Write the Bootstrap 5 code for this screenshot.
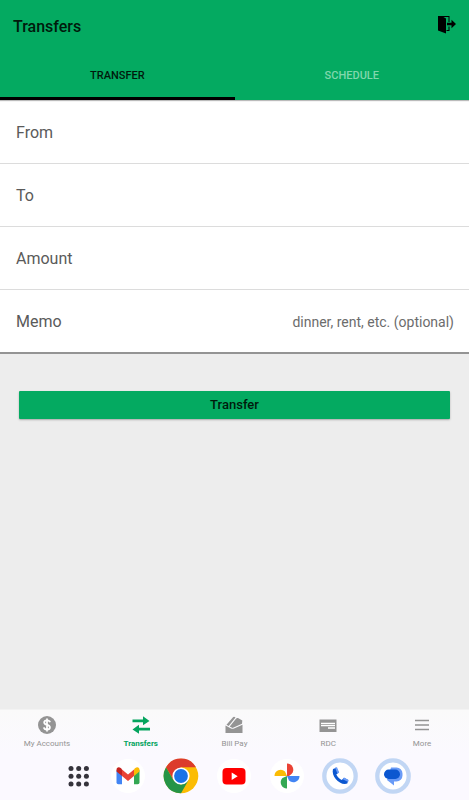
<!DOCTYPE html>
<html lang="en">
<head>
<meta charset="utf-8">
<meta name="viewport" content="width=device-width, initial-scale=1">
<title>Transfers</title>
<link href="https://cdn.jsdelivr.net/npm/bootstrap@5.3.0/dist/css/bootstrap.min.css" rel="stylesheet">
<style>
body{font-family:Roboto,"Liberation Sans",sans-serif;background:#ededed;color:#000}
button,input{font-family:inherit}
.app-top{background:#04aa61;box-shadow:0 1px 1px #bbb;z-index:1}
.title-bar{height:52px;padding:1px 13px 0}
.title-bar h1{font-size:16px;line-height:20px;font-weight:500;color:#001a0c}
.tab-link{height:48px;border:0;border-bottom:3px solid transparent;border-radius:0;background:none;font-size:11px;line-height:16px;font-weight:500;color:#80d7ad;padding:2px 0 0}
.tab-link.active{color:#001a0c;border-bottom-color:#000}
.form-rows{background:#fff;padding-top:1px;border-bottom:2px solid #949494}
.form-line{height:63px;padding:1px 15px 0 16px;border-bottom:1px solid #dcdcdc;font-size:16px;line-height:24px;color:#5a5a5a}
.form-line:last-child{border-bottom:0;height:62px}
.form-line input,.form-line button{border:0;outline:0;background:none;min-width:0;padding:0;text-align:right;font-size:14px;color:#666;height:40px}
.form-line input::placeholder{color:#6c6c6c;opacity:1}
.form-action{padding:37px 19px}
.btn-transfer{height:28px;background:#04aa61;border:0;border-radius:1px;padding:0;font-size:13px;line-height:16px;font-weight:500;color:#001a0c;box-shadow:0 1px 2px #aaa}
.app-bottom{background:linear-gradient(#fafafa,#fbf9ff 45px);border-top:1px solid #f3f3f3}
.nav-item-link{height:41px;padding-top:5px;color:#949494;font-size:8px;line-height:12px;text-decoration:none}
.nav-item-link svg{width:20px;height:20px;margin-bottom:3px}
.nav-item-link.active{color:#04a45e;font-weight:700}
.dock{height:49px;padding-right:1px;gap:17px}
.dock button,.top-icon{border:0;background:none;padding:0}
.dock button{width:36px;height:36px}
.dock svg,.top-icon svg{display:block}
</style>
<script src="https://cdn.jsdelivr.net/npm/bootstrap@5.3.0/dist/js/bootstrap.bundle.min.js"></script>
</head>
<body class="min-vh-100 d-flex flex-column">
<header class="app-top position-relative">
  <div class="title-bar d-flex align-items-center justify-content-between">
    <h1 class="m-0">Transfers</h1>
    <button class="top-icon mb-1" type="button" aria-label="Log out">
      <svg width="20" height="20" viewBox="0 0 20 20"><path d="M2 1h11.500v6h-1V2H7.500L10 3.500V18.500l-8-3zM12.500 11.500h1v4.500h-3v-1h2z"/><path d="M11 7.700h4.500V4.800l4.500 4.200-4.500 4.200v-2.900H11z"/></svg>
    </button>
  </div>
  <div class="nav nav-fill" role="tablist">
    <button class="nav-item tab-link active" role="tab" aria-selected="true" type="button">TRANSFER</button>
    <button class="nav-item tab-link" role="tab" aria-selected="false" type="button">SCHEDULE</button>
  </div>
</header>
<main class="flex-grow-1">
  <form>
    <div class="form-rows">
      <div class="form-line d-flex align-items-center"><label for="from">From</label><button id="from" class="flex-grow-1" type="button"></button></div>
      <div class="form-line d-flex align-items-center"><label for="to">To</label><button id="to" class="flex-grow-1" type="button"></button></div>
      <div class="form-line d-flex align-items-center"><label for="amount">Amount</label><input id="amount" class="flex-grow-1" type="text" inputmode="decimal"></div>
      <div class="form-line d-flex align-items-center"><label for="memo">Memo</label><input id="memo" class="flex-grow-1" type="text" placeholder="dinner, rent, etc. (optional)"></div>
    </div>
    <div class="form-action"><button class="btn btn-transfer w-100 d-block" type="button">Transfer</button></div>
  </form>
</main>
<footer class="app-bottom">
  <nav class="row row-cols-5 g-0" aria-label="Main">
    <a class="col nav-item-link d-flex flex-column align-items-center" href="#accounts">
      <svg viewBox="0 0 20 20"><circle cx="10" cy="10" r="9" fill="#949494"/><path d="M13 7.300C12.700 5.900 11.600 5.400 10 5.400 8.300 5.400 7.200 6.200 7.200 7.500c0 3.300 5.700 1.500 5.700 4.800 0 1.400-1.200 2.300-2.900 2.300s-2.900-.7-3.100-2.200M10 3.500v13" fill="none" stroke="#fff" stroke-width="1.800"/></svg>My Accounts</a>
    <a class="col nav-item-link active d-flex flex-column align-items-center" href="#transfers" aria-current="page">
      <svg viewBox="0 0 20 20" fill="#04a45e"><path d="M1.500 4.500h10.500V1.200L18.500 6l-6.500 4.300V7.200H1.500zM19 12.800H8V9.700l-6.500 4.700L8 18.700v-3.200h11z"/></svg>Transfers</a>
    <a class="col nav-item-link d-flex flex-column align-items-center" href="#bills">
      <svg viewBox="0 0 20 20" fill="#949494"><path d="M1.500 10.500l5.500 3q1.500.7 3 0l8.500-3.800v8.300h-17z"/><path d="M2.500 9.800L9 2.200q.8-.8 1.800-.2l.7.400-6.800 8.500zM5.700 11.500l6.500-8q.7-.9 1.800-.4l4.300 2.400-.3 3.300-9 4q-.5.200-1 0z"/></svg>Bill Pay</a>
    <a class="col nav-item-link d-flex flex-column align-items-center" href="#rdc">
      <svg viewBox="0 0 20 20"><path d="M1.500 4.500h17V17h-17z" fill="#949494"/><path d="M3 8.500h14M3 10.700h14M10 13h7" stroke="#fff" stroke-width="1.300"/></svg>RDC</a>
    <a class="col nav-item-link d-flex flex-column align-items-center" href="#more">
      <svg viewBox="0 0 20 20"><path d="M3 5.500h14M3 10h14M3 14.500h14" stroke="#949494" stroke-width="1.500"/></svg>More</a>
  </nav>
  <div class="dock d-flex justify-content-center align-items-center">
    <button type="button" aria-label="All apps"><svg width="36" height="36" viewBox="0 0 36 36" fill="#35333c"><g id="dots"><circle cx="14" cy="10.500" r="2.500"/><circle cx="21.700" cy="10.500" r="2.500"/><circle cx="29.400" cy="10.500" r="2.500"/></g><use href="#dots" y="7.700"/><use href="#dots" y="15.400"/></svg></button>
    <button type="button" aria-label="Gmail"><svg width="36" height="36" viewBox="0 0 36 36"><circle cx="18" cy="18" r="17" fill="#fff"/><path d="M6.500 12v12.500q0 1.800 1.800 1.800H12V16z" fill="#4285f4"/><path d="M29.500 12v12.500q0 1.800-1.800 1.800H24V16z" fill="#34a853"/><path d="M12 11.500l6 5 6-5V18l-6 5-6-5z" fill="#ea4335"/><path d="M6.500 13.500V12c0-3 2.500-3.500 4.500-1.700l1 1V18z" fill="#c5221f"/><path d="M29.500 13.500V12c0-3-2.500-3.500-4.500-1.700l-1 1V18z" fill="#fbbc04"/></svg></button>
    <button type="button" aria-label="Chrome"><svg width="36" height="36" viewBox="0 0 36 36"><circle cx="18" cy="18" r="17.300" fill="#fbbc04"/><path d="M3 9.300A17.300 17.300 0 0 1 33 9.300H18L10.500 22z" fill="#dc3b2c"/><path d="M3 9.300A17.300 17.300 0 0 0 18 35.300L25.500 22.300 18 26.700 10.500 22.300z" fill="#259447"/><circle cx="18" cy="18" r="8.600" fill="#fff"/><circle cx="18" cy="18" r="6.900" fill="#1a73e8"/></svg></button>
    <button type="button" aria-label="YouTube"><svg width="36" height="36" viewBox="0 0 36 36"><circle cx="18" cy="18" r="17" fill="#fff"/><rect x="6.500" y="10" width="23" height="16.500" rx="4" fill="#f00"/><path d="M15.700 14.500l6 3.700-6 3.700z" fill="#fff"/></svg></button>
    <button type="button" aria-label="Photos"><svg width="36" height="36" viewBox="0 0 36 36"><circle cx="18" cy="18" r="17" fill="#fff"/><path d="M18 18V5.500a6.200 6.200 0 0 1 4.500 10.500L20 18z" fill="#ea4335"/><path d="M18 18h12.500A6.200 6.200 0 0 1 20 22.500z" fill="#4285f4"/><path d="M18 18v12.500A6.200 6.200 0 0 1 13.500 20z" fill="#34a853"/><path d="M18 18H5.500A6.200 6.200 0 0 1 16 13.500z" fill="#fbbc04"/></svg></button>
    <button type="button" aria-label="Phone"><svg width="36" height="36" viewBox="0 0 36 36"><circle cx="18" cy="18" r="15.700" fill="#fff" stroke="#c1d6f4" stroke-width="4.300"/><path d="M11 11l3.500-1.200 2.300 4.700-2.500 2c1.300 2.700 3 4.400 5.500 5.600l2.200-2.400 4.300 2.200-1 3.700c-7 2.500-16.500-7-14.300-14.600z" fill="#0b57d0"/><path d="M13 9.500l2-.3 2.200 5.200-1.700 1.300zM22 19.600l4.500 2.300-.3 2-5.500-2.700z" fill="#699bf7"/></svg></button>
    <button type="button" aria-label="Messages"><svg width="36" height="36" viewBox="0 0 36 36"><circle cx="18" cy="18" r="15.700" fill="#fff" stroke="#c1d6f4" stroke-width="4.300"/><path d="M16 9.500h5.500a6 6 0 0 1 6 6v2a6 6 0 0 1-6 6h-2.500V27.500L12 22z" fill="#699bf7"/><rect x="9" y="11.500" width="16" height="9.500" rx="4.700" fill="#0b57d0"/></svg></button>
  </div>
</footer>
</body>
</html>
